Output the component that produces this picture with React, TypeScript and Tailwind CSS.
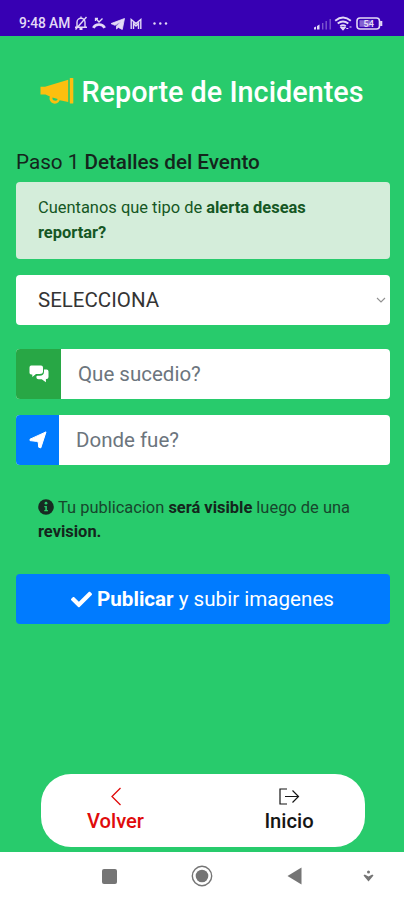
import React from 'react';
import { FaCheck } from 'react-icons/fa';

const MegaphoneIcon = () => (
  <svg className="mb-[5px]" width="34" height="28" viewBox="0 0 34 28" fill="#fdbf0f">
    <path d="M0.500 9.800h4.500L28.200 2.700v22.300l-6-1.300-2.500-.4a5.200 5.200 0 0 1-9.800-3.800L5.500 17.500H0.500z" />
    <rect x="29.800" y="1" width="3.500" height="25.500" rx="0.600" />
    <path d="M12.500 20.500l5.200 1.400a2.700 2.700 0 0 1-5.200-1.400z" fill="#28cb6c" />
  </svg>
);

const MessagesIcon = () => (
  <svg width="20" height="18" viewBox="0 0 20 18" fill="#ffffff">
    <path d="M2.200.5h9.800q2 0 2 2v4q0 2.500-3.500 2.500H7l-3.700 3V9.500H2.200Q.5 9.500.5 7.800V2.500q0-2 1.700-2z" />
    <path d="M15 4.500h2.500q2 0 2 2v5.500q0 2-2 2h-.6v3.300l-4.200-3H9.500q-2 0-2.300-2.500l1-1h2.300q4.500 0 4.500-4z" />
  </svg>
);

const LocationIcon = () => (
  <svg width="18" height="18" viewBox="0 0 18 18" fill="#ffffff" stroke="#ffffff" strokeWidth="1" strokeLinejoin="round">
    <path d="M17 .9L11.800 16.900 9.700 16.200 9.300 11.300 7.800 10.400 1 9.600 1 8.200z" />
  </svg>
);

const InfoIcon = () => (
  <svg className="mr-1 inline-block align-[-2px]" width="16" height="16" viewBox="0 0 16 16">
    <circle cx="8" cy="8" r="7.800" fill="#172b22" />
    <circle cx="8" cy="4.200" r="1.400" fill="#28cb6c" />
    <path d="M6.300 7h2.600v4h1v1.300H6.300V11h1V8.200h-1z" fill="#28cb6c" />
  </svg>
);

const StatusBar = () => (
  <div className="flex h-[35.500px] items-start bg-[#3700b3] pl-[19px] pr-[21px] pt-[15px] text-[#e3d9f6]">
    <span className="w-[52px] whitespace-nowrap text-[13.800px] font-medium leading-[17px] tracking-[-0.100px]">9:48 AM</span>
    <svg className="ml-[3px] mt-px" width="14" height="15" viewBox="0 0 14 15" fill="none" stroke="currentColor" strokeWidth="1.400">
      <path d="M3 11V6.200a4 4 0 0 1 8 0V11M1 11.300h12M12.500 1L1.500 13.500M7 .6v2" />
      <path d="M5.500 13h3" strokeWidth="2" />
    </svg>
    <svg className="ml-[4px] mt-[2px]" width="14" height="12" viewBox="0 0 14 12" fill="none" stroke="currentColor">
      <path d="M1.300 10.800Q3 7.500 7 7.500t5.700 3.300" strokeWidth="2.700" />
      <path d="M3.800 1.500L7 5l3.500-3.500M3.500 4V1.500h2.500" strokeWidth="1.300" />
    </svg>
    <svg className="ml-[5px] mt-[3px]" width="14" height="12" viewBox="0 0 14 12" fill="currentColor">
      <path d="M13.500.5L0 5.600l4 1.700L10 3.500 5.500 8v3l1.800-1.600 4 2.100z" stroke="currentColor" strokeWidth=".8" />
    </svg>
    <svg className="ml-[5px] mt-[3px]" width="12" height="12" viewBox="0 0 12 12" fill="none" stroke="currentColor">
      <path d="M1.200 11V1.500L6 5.500l4.800-4V11M3.500 11V5.500L6 8l2.500-2.500V11" strokeWidth="1.400" />
    </svg>
    <svg className="ml-[11px] mt-[7px]" width="15" height="3" viewBox="0 0 15 3" fill="currentColor">
      <circle cx="1.500" cy="1.500" r="1.200" />
      <circle cx="7.300" cy="1.500" r="1.200" />
      <circle cx="13" cy="1.500" r="1.200" />
    </svg>
    <div className="ml-auto flex items-center pt-px">
      <svg width="20" height="14" viewBox="0 0 20 14" fill="currentColor">
        <path d="M1 12.500v-2l2-1v3zM4 12.500V9l2.500-1.500v5z" />
        <path d="M9 6h1.400v6.500H9zM12.500 4h1.400v8.500h-1.400zM16.500 2h1.400v10.500h-1.400z" opacity=".4" />
      </svg>
      <svg className="ml-px" width="19" height="15" viewBox="0 0 19 15" fill="none" stroke="currentColor" strokeWidth="1.900">
        <path d="M1.200 4.700q8-6.500 15.600 0M3.700 7.600q5.300-4.400 10.600 0M6.200 10.200q2.800-2 5.600 0" />
        <path d="M9 13.800l-2-2.300h4zM12.300 12.500h2M15.500 11h2" fill="currentColor" strokeWidth="1.200" />
      </svg>
      <svg className="ml-[3px]" width="27" height="13" viewBox="0 0 27 13" fill="none" stroke="currentColor">
        <rect x="1" y="1" width="22.500" height="11" rx="3" strokeWidth="1.600" />
        <path d="M25.200 4v5" strokeWidth="2.200" />
        <rect x="3.500" y="3.200" width="11" height="6.600" fill="currentColor" stroke="none" opacity=".45" />
        <text x="7.500" y="9.800" fontSize="9" fontWeight="700" fill="currentColor" stroke="none">54</text>
      </svg>
    </div>
  </div>
);

const fields = [
  { placeholder: 'Que sucedio?', icon: <MessagesIcon />, addon: 'w-[45px] bg-[#28a745]', input: 'pl-[17px]' },
  { placeholder: 'Donde fue?', icon: <LocationIcon />, addon: 'w-[43px] bg-[#007bff]', input: 'pl-[17px]' },
];

const BottomMenu = () => (
  <nav className="mb-[5px] ml-[41px] mt-auto flex h-[73px] w-[324px] rounded-[30px] bg-white text-[20.200px] font-medium leading-[24px]">
    <a className="flex w-[149px] flex-col items-center pt-[13px] text-[#e00b0b]">
      <svg width="12" height="19" viewBox="0 0 12 19" fill="none" stroke="currentColor" strokeWidth="1.300">
        <path d="M10.500 1L2 9.500l8.500 8.500" />
      </svg>
      <span className="mt-[3px]">Volver</span>
    </a>
    <a className="ml-[24px] flex w-[150px] flex-col items-center pt-[13px] text-[#151515]">
      <svg width="22" height="19" viewBox="0 0 22 19" fill="none" stroke="currentColor" strokeWidth="1.200">
        <path d="M9 2H2v15h7M7 9.500h13.500M14.500 3.500l6 6-6 6" />
      </svg>
      <span className="mt-[3px]">Inicio</span>
    </a>
  </nav>
);

const SystemNav = () => (
  <div className="flex h-[48px] items-center bg-white pl-[102px] text-[#757575]">
    <div className="h-[15px] w-[15px] rounded-[2px] bg-current" />
    <svg className="ml-[74px]" width="22" height="22" viewBox="0 0 22 22" fill="none" stroke="currentColor">
      <circle cx="11" cy="11" r="9.700" strokeWidth="1.400" />
      <circle cx="11" cy="11" r="6.300" fill="currentColor" stroke="none" />
    </svg>
    <svg className="ml-[74px]" width="15" height="18" viewBox="0 0 15 18" fill="currentColor">
      <path d="M14.500 0.500v17L.5 9z" />
    </svg>
    <svg className="ml-[61px]" width="11" height="12" viewBox="0 0 11 12" fill="currentColor">
      <circle cx="5.500" cy="2" r="1.500" />
      <path d="M.5 5.500l1.200-1 3.800 2 3.800-2 1.200 1-5 6z" />
    </svg>
  </div>
);

export default function App() {
  return (
    <div className="flex h-[900px] w-[404px] flex-col overflow-hidden bg-[#28cb6c] font-[Roboto,sans-serif]">
      <StatusBar />

      <main className="flex flex-col pl-4 pr-[14px]">
        <h1 className="mt-[38.500px] flex h-[38px] items-center justify-center gap-[7px] whitespace-nowrap pr-[2px] text-[28.800px] font-medium text-white">
          <MegaphoneIcon />
          Reporte de Incidentes
        </h1>

        <h2 className="mt-[37.500px] h-[24px] whitespace-nowrap text-[20.650px] leading-[24px] text-[#14251c]">
          Paso 1 <span className="font-medium">Detalles del Evento</span>
        </h2>

        <div className="mt-[8.500px] h-[77px] rounded-[4px] bg-[#d4edda] px-[22px] pt-[14px] text-[16.450px] leading-[24.500px] text-[#155724]">
          Cuentanos que tipo de <b>alerta deseas<br />reportar?</b>
        </div>

        <div className="mt-[16px] flex h-[50px] items-center justify-between rounded-[4px] bg-white pl-[22px] pr-[4px] text-[20.500px] text-[#343434]">
          SELECCIONA
          <svg width="10" height="7" viewBox="0 0 10 7" fill="none" stroke="#909090" strokeWidth="1.100">
            <path d="M1 1l4 4 4-4" />
          </svg>
        </div>

        <div className="mt-[24px] flex flex-col gap-4">
          {fields.map((field) => (
            <div key={field.placeholder} className="flex h-[50px] overflow-hidden rounded-[4px] bg-white">
              <div className={`flex shrink-0 items-center justify-center ${field.addon}`}>{field.icon}</div>
              <input
                className={`min-w-0 flex-1 text-[20.500px] outline-none placeholder:text-[#6c757d] ${field.input}`}
                placeholder={field.placeholder}
              />
            </div>
          ))}
        </div>

        <p className="mt-[30.500px] h-[49px] whitespace-nowrap px-[22px] text-[16.450px] leading-[24.500px] text-[#17462c]">
          <InfoIcon />
          Tu publicacion <b className="text-[#14251c]">será visible</b> luego de una
          <br />
          <b className="text-[#14251c]">revision.</b>
        </p>

        <button className="mt-[29.500px] flex h-[50px] items-center justify-center whitespace-nowrap rounded-[4px] bg-[#007bff] pr-px text-[20.600px] text-white">
          <FaCheck className="mr-[5px]" size={21} />
          <span><b>Publicar</b> y subir imagenes</span>
        </button>
      </main>

      <BottomMenu />
      <SystemNav />
    </div>
  );
}
